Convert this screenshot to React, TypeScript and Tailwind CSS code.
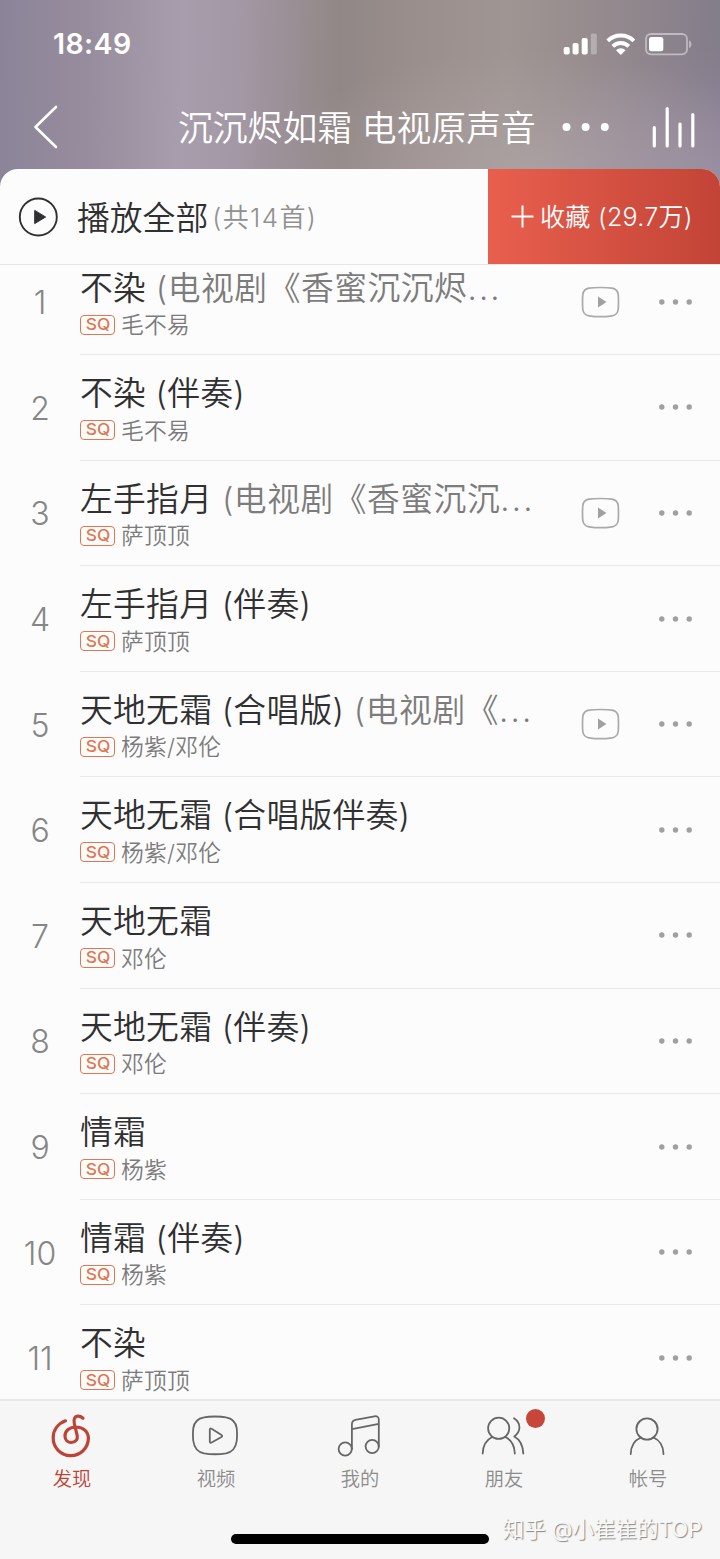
import React from 'react';

interface Song {
  title: string;
  alias?: string;
  artist: string;
  hasVideo?: boolean;
}

const songs: Song[] = [
  { title: '不染', alias: ' (电视剧《香蜜沉沉烬', artist: '毛不易', hasVideo: true },
  { title: '不染 (伴奏)', artist: '毛不易' },
  { title: '左手指月', alias: ' (电视剧《香蜜沉沉', artist: '萨顶顶', hasVideo: true },
  { title: '左手指月 (伴奏)', artist: '萨顶顶' },
  { title: '天地无霜 (合唱版)', alias: ' (电视剧《', artist: '杨紫/邓伦', hasVideo: true },
  { title: '天地无霜 (合唱版伴奏)', artist: '杨紫/邓伦' },
  { title: '天地无霜', artist: '邓伦' },
  { title: '天地无霜 (伴奏)', artist: '邓伦' },
  { title: '情霜', artist: '杨紫' },
  { title: '情霜 (伴奏)', artist: '杨紫' },
  { title: '不染', artist: '萨顶顶' },
];

function StatusBar() {
  return (
    <div className="flex h-[88px] items-center justify-between pl-[53px] pr-[28px]">
      <span className="font-['Inter','Liberation_Sans',sans-serif] text-[28.5px] font-semibold leading-none tracking-[0.4px]">18:49</span>
      <svg width="129" height="24" viewBox="563 32 129 24" fill="white">
        <rect x="563.7" y="47" width="6" height="7.5" rx="1.8" />
        <rect x="572.6" y="43" width="6" height="11.5" rx="1.8" />
        <rect x="581.7" y="38" width="6" height="16.5" rx="1.8" />
        <rect x="590.8" y="33.5" width="6" height="21" rx="1.8" opacity="0.3" />
        <g fill="none" stroke="white" strokeWidth="3.8">
          <path d="M607.7 40.9a18.6 18.6 0 0 1 26.2 0" />
          <path d="M612.8 46.3a11.4 11.4 0 0 1 16 0" />
        </g>
        <path d="M616 50.2a7 7 0 0 1 9.6 0L620.8 55z" />
        <rect x="646" y="34" width="41" height="20.3" rx="5" fill="none" stroke="white" strokeWidth="1.8" opacity="0.45" />
        <path d="M689 40.5c3.2 1 3.2 6.4 0 7.4z" opacity="0.45" />
        <rect x="649" y="37" width="14.3" height="14.3" rx="2.5" />
      </svg>
    </div>
  );
}

function TitleBar() {
  return (
    <div className="flex h-[81px] items-center pb-[3px] pl-[32px] pr-[22px]">
      <svg width="28" height="46" viewBox="32 104 28 46" fill="none" stroke="white" strokeWidth="2.6" strokeLinecap="round" strokeLinejoin="round">
        <path d="M56 107 35.5 127 56 147" />
      </svg>
      <h1 className="ml-[118px] w-[384px] whitespace-nowrap pt-[3px] text-[34.8px] font-[350] leading-none">沉沉烬如霜 电视原声音</h1>
      <svg className="shrink-0" width="136" height="46" viewBox="562 104 136 46" fill="white">
        <circle cx="566.5" cy="127" r="4" />
        <circle cx="585.6" cy="127" r="4" />
        <circle cx="604.8" cy="127" r="4" />
        <g stroke="white" strokeWidth="3.2" strokeLinecap="round">
          <path d="M654.3 127.5v18.5M667.2 108.5V146M680 124v22M692.8 114.5V146" />
        </g>
      </svg>
    </div>
  );
}

function PlayAllBar() {
  return (
    <div className="flex h-[96px] overflow-hidden rounded-t-[18px] border-b border-[#e6e6e6] bg-[#fcfcfc]">
      <div className="flex w-[488px] items-center whitespace-nowrap pl-[18px]">
        <svg width="40" height="40" viewBox="0 0 40 40" fill="none">
          <circle cx="20.3" cy="20" r="18.5" stroke="#303032" strokeWidth="1.9" />
          <path d="M16.7 13.4v13.2L27.6 20z" fill="#303032" stroke="#303032" strokeLinejoin="round" />
        </svg>
        <span className="ml-[19px] pt-[4px] text-[32.8px] font-[350] leading-none text-[#303032]">播放全部</span>
        <span className="ml-[4px] pt-[2px] text-[26px] font-[350] leading-none tracking-[1.4px] text-[#909090]">(共14首)</span>
      </div>
      <button className="flex flex-1 items-center whitespace-nowrap bg-gradient-to-r from-[#e95f4e] to-[#c24436] pl-[23px] text-white">
        <svg width="23" height="24" viewBox="0 0 23 24" stroke="white" strokeWidth="2">
          <path d="M0.5 11.5h22M11.5 0.5v22" />
        </svg>
        <span className="ml-[6px] pt-[2px] text-[25px] font-[350] leading-none tracking-[0.3px]">收藏 (29.7万)</span>
      </button>
    </div>
  );
}

function SongRow({ song, index }: { song: Song; index: number }) {
  return (
    <li className="flex h-[105.6px] shrink-0">
      <span className="flex w-[80px] items-center justify-center pt-[2px] text-[32px] font-light text-[#868686]">{index}</span>
      <div className="flex flex-1 border-b border-[#e9e9e9]">
        <div className="w-[501px] whitespace-nowrap pt-[18px]">
          <p className="h-[40px] whitespace-pre text-[32.8px] font-[350] leading-[40px] tracking-[0.25px] text-[#303032]">
            {song.title}
            {song.alias && (
              <span className="tracking-[0.5px] text-[#7c7c7c]">
                {song.alias}
                <span className="tracking-[2.2px]">...</span>
              </span>
            )}
          </p>
          <div className="mt-[1px] flex h-[32px] items-center">
            <span className="flex h-[20px] w-[35px] items-center justify-center rounded-[4px] border-[1.5px] border-[#e2764e]">
              <span className="scale-x-[1.12] text-[15.5px] font-medium leading-none text-[#e2764e]">SQ</span>
            </span>
            <span className="ml-[6px] pt-px text-[22.8px] font-[350] leading-[32px] tracking-[0.2px] text-[#7c7c7c]">{song.artist}</span>
          </div>
        </div>
        <div className="flex flex-1 items-center justify-between pr-[27px]">
          <svg width="39" height="32" viewBox="0 0 39 32" fill="none">
            {song.hasVideo && (
              <>
                <path d="M19.5 1.5c5 0 8.5.2 11.5.7 4.2.7 5.7 2.7 6.2 6.3.4 5 .4 10 0 15-.5 3.6-2 5.6-6.2 6.3-6 .9-17 .9-23 0-4.200-.7-5.700-2.700-6.200-6.300-.4-5-.4-10 0-15C2.300 4.900 3.800 2.900 8 2.200c3-.5 6.500-.7 11.500-.7z" stroke="#aaa" strokeWidth="1.7" />
                <path d="M17 10.5v11l8.5-5.5z" fill="#a0a0a0" />
              </>
            )}
          </svg>
          <svg width="36" height="8" viewBox="0 0 36 8" fill="#a0a0a0">
            <circle cx="4.8" cy="4" r="2.7" />
            <circle cx="18.5" cy="4" r="2.7" />
            <circle cx="32.2" cy="4" r="2.7" />
          </svg>
        </div>
      </div>
    </li>
  );
}

const iconProps = {
  width: 48,
  height: 48,
  viewBox: '0 0 48 48',
  fill: 'none',
  stroke: 'currentColor',
  strokeWidth: 1.8,
  strokeLinecap: 'round' as const,
  strokeLinejoin: 'round' as const,
};

const tabs = [
  {
    label: '发现',
    active: true,
    icon: (
      <svg {...iconProps} strokeWidth={3.2}>
        <path d="M17.5 8.8C10 11.600 5.200 18 5.200 25.800a17.600 17.600 0 0 0 35.200.6c0-6.800-5.400-11.400-12.200-11.400-6.800 0-11.200 3.800-11.200 8.900 0 4 2.700 6.600 6.200 6.600 4.200 0 6.800-2.900 6-6.800L26.300 11.500C25.300 7 26.800 4.200 30.200 4.200c2 0 3.300.7 4.800 2" />
      </svg>
    ),
  },
  {
    label: '视频',
    icon: (
      <svg {...iconProps}>
        <path d="M23 4.500c4.500 0 8 .2 11 .8 7 1.200 9.800 4.700 10.700 10.700.5 4.500.5 8.500 0 13-.9 6.500-3.700 11-10.700 12.400-6.500 1-15.500 1-22 0C5 40 2.200 35.500 1.300 29c-.5-4.500-.5-8.500 0-13C2.200 10 5 6.500 12 5.300c3-.6 6.500-.8 11-.8z" />
        <path d="M17.8 17.5v12c0 1.300.8 1.600 1.800 1L29.500 25c.9-.5.9-1.500 0-2l-9.900-6.300c-1-.6-1.800-.3-1.800.8z" />
      </svg>
    ),
  },
  {
    label: '我的',
    icon: (
      <svg {...iconProps}>
        <circle cx="9.2" cy="37" r="6.6" />
        <circle cx="36.2" cy="34.5" r="6.6" />
        <path d="M15.9 37V12.5c0-2.500 1-4 3.500-4.600l19-3.600c2.800-.5 4.400.8 4.400 3.400v26.800M16 17.200l26.800-5.400" />
      </svg>
    ),
  },
  {
    label: '朋友',
    badge: true,
    icon: (
      <svg {...iconProps}>
        <circle cx="18.7" cy="16.3" r="10.6" />
        <path d="M2.7 41.5c.2-8 3.8-13.7 9.5-16.500M25.300 25c5.900 2.800 9.300 8.500 9.500 16.500M34 6.200c7.200 4.800 7.200 13 .3 18.300 5.500 3 8.600 9 9 17" />
      </svg>
    ),
  },
  {
    label: '帐号',
    icon: (
      <svg {...iconProps}>
        <circle cx="23" cy="17" r="10.6" />
        <path d="M6.7 42c.2-8 4-13.8 10.3-16.500M29.500 25.500C35.800 28.200 39.300 34 39.500 42" />
      </svg>
    ),
  },
];

function TabBar() {
  return (
    <nav className="relative flex h-[160px] border-t-2 border-[#e8e8e8] bg-[#f6f6f6]">
      {tabs.map((tab) => (
        <div key={tab.label} className={`flex flex-1 flex-col items-center pt-[11px] ${tab.active ? 'text-[#bd4337]' : 'text-[#666]'}`}>
          <div className="relative">
            {tab.icon}
            {tab.badge && <span className="absolute -top-[3px] left-[46px] size-[19px] rounded-full bg-[#c6463b]" />}
          </div>
          <span className={`mt-[7px] text-[19.3px] font-[350] leading-[24px] ${tab.active ? '' : 'text-[#8c8c8c]'}`}>{tab.label}</span>
        </div>
      ))}
      <div className="absolute bottom-[15px] left-[231px] h-[10px] w-[258px] rounded-full bg-black" />
      <span className="absolute bottom-[16px] right-[18px] whitespace-nowrap text-[21.5px] leading-[28px] text-[#f8f8f8] [text-shadow:1px_1px_1px_#888]">
        知乎 @小崔崔的TOP
      </span>
    </nav>
  );
}

function App() {
  return (
    <div className="flex h-[1559px] w-[720px] flex-col overflow-hidden bg-[#fcfcfc] font-['Inter','Noto_Sans_CJK_SC',sans-serif]">
      <div className="h-[265px] shrink-0 bg-[radial-gradient(ellipse_260px_120px_at_530px_170px,#b5aaad90,transparent),radial-gradient(ellipse_200px_120px_at_720px_170px,#9f92ae90,transparent),linear-gradient(91deg,#8b8499_0%,#978c9d_12%,#a89dac_25%,#a398a5_33%,#918786_47%,#9a8f8c_58%,#9f9592_70%,#948a8e_84%,#837c8a_100%)] text-white">
        <StatusBar />
        <TitleBar />
        <PlayAllBar />
      </div>
      <div className="h-[1134px] shrink-0 overflow-hidden">
        <ul className="-mt-[15.5px] flex flex-col">
          {songs.map((song, i) => (
            <SongRow key={i} song={song} index={i + 1} />
          ))}
        </ul>
      </div>
      <TabBar />
    </div>
  );
}

export default App;
